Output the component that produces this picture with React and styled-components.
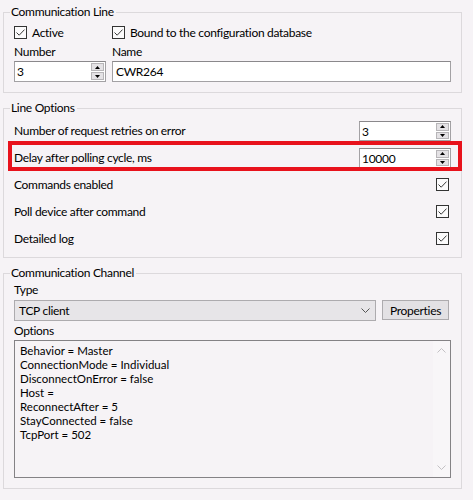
import React from 'react'
import styled, { createGlobalStyle } from 'styled-components'

const GlobalStyle = createGlobalStyle`
  html, body {
    margin: 0;
    padding: 0;
    background: #f6f3f6;
  }
  body {
    font-family: Lato, "Noto Sans", sans-serif;
    font-size: 12px;
    letter-spacing: -0.3px;
    color: #000;
  }
`

const options = [
  'Behavior = Master',
  'ConnectionMode = Individual',
  'DisconnectOnError = false',
  'Host =',
  'ReconnectAfter = 5',
  'StayConnected = false',
  'TcpPort = 502',
]

const lineOptions = [
  { label: 'Number of request retries on error', kind: 'spin', value: '3' },
  { label: 'Delay after polling cycle, ms', kind: 'spin', value: '10000', highlighted: true },
  { label: 'Commands enabled', kind: 'check' },
  { label: 'Poll device after command', kind: 'check' },
  { label: 'Detailed log', kind: 'check' },
]

const Check = () => (
  <CheckBox>
    <svg width="11" height="11" viewBox="0 0 11 11">
      <path d="M1.5 5.5 L4.2 8.2 L9.5 2.6" fill="none" stroke="#3a3a3a" strokeWidth="1" />
    </svg>
  </CheckBox>
)

const SpinInput = ({ value, width }) => (
  <InputBox $width={width}>
    <InputText>{value}</InputText>
    <Spin>
      <SpinBtn>
        <svg width="5" height="3" viewBox="0 0 5 3"><polygon points="2.5,0 5,3 0,3" fill="#000" /></svg>
      </SpinBtn>
      <SpinBtn>
        <svg width="5" height="3" viewBox="0 0 5 3"><polygon points="0,0 5,0 2.5,3" fill="#000" /></svg>
      </SpinBtn>
    </Spin>
  </InputBox>
)

export default function App() {
  return (
    <Page>
      <GlobalStyle />

      <Group $pad="4px 10px 10px 10px">
        <Legend>Communication Line</Legend>
        <LineGrid>
          <CheckLabel><Check />Active</CheckLabel>
          <CheckLabel><Check />Bound to the configuration database</CheckLabel>
          <FieldLabel $top={3}>Number</FieldLabel>
          <FieldLabel $top={3}>Name</FieldLabel>
          <SpinInput value="3" />
          <InputBox>
            <InputText $pad={3}>CWR264</InputText>
          </InputBox>
        </LineGrid>
      </Group>

      <Group $pad="1px 10px 5px 10px">
        <Legend>Line Options</Legend>
        {lineOptions.map((o) => (
          <OptionRow key={o.label} $highlighted={o.highlighted}>
            <span>{o.label}</span>
            {o.kind === 'spin' ? <SpinInput value={o.value} width={92} /> : <RightCheck><Check /></RightCheck>}
          </OptionRow>
        ))}
      </Group>

      <Group $pad="1px 10px 10px 10px">
        <Legend>Communication Channel</Legend>
        <FieldLabel>Type</FieldLabel>
        <SelectRow>
          <Select>
            <span>TCP client</span>
            <svg width="9" height="5" viewBox="0 0 9 5">
              <path d="M0.5 0.5 L4.5 4.5 L8.5 0.5" fill="none" stroke="#555" strokeWidth="1" />
            </svg>
          </Select>
          <Button>Properties</Button>
        </SelectRow>
        <FieldLabel $top={2}>Options</FieldLabel>
        <OptionsBox>
          <OptionLines>
            {options.map((l) => <div key={l}>{l}</div>)}
          </OptionLines>
          <ScrollTrack>
            <svg width="9" height="5" viewBox="0 0 9 5">
              <path d="M0.5 4.5 L4.5 0.5 L8.5 4.5" fill="none" stroke="#c3c1c4" strokeWidth="1" />
            </svg>
            <svg width="9" height="5" viewBox="0 0 9 5">
              <path d="M0.5 0.5 L4.5 4.5 L8.5 0.5" fill="none" stroke="#c3c1c4" strokeWidth="1" />
            </svg>
          </ScrollTrack>
        </OptionsBox>
      </Group>
    </Page>
  )
}

const Page = styled.div`
  width: 473px;
  height: 500px;
  box-sizing: border-box;
  padding: 4px 11px 0 3px;
  display: flex;
  flex-direction: column;
  gap: 7px;
`

const Group = styled.fieldset`
  margin: 0;
  min-width: 0;
  border: 1px solid #dcd9dc;
  padding: ${(p) => p.$pad};
`

const Legend = styled.legend`
  padding: 0 2px 0 1px;
  margin-left: -4px;
  line-height: 16px;
`

const LineGrid = styled.div`
  display: grid;
  grid-template-columns: 92px 1fr;
  column-gap: 6px;
  & > :nth-child(5), & > :nth-child(6) {
    margin-top: 1px;
  }
`

const CheckLabel = styled.label`
  display: flex;
  align-items: center;
  gap: 5px;
  white-space: nowrap;
  height: 17px;
`

const CheckBox = styled.span`
  width: 13px;
  height: 13px;
  box-sizing: border-box;
  border: 1px solid #333;
  background: #fbfafb;
  display: inline-flex;
  align-items: center;
  justify-content: center;
  flex: none;
`

const RightCheck = styled.span`
  display: flex;
  margin-right: 2px;
`

const FieldLabel = styled.div`
  line-height: 16px;
  margin-top: ${(p) => p.$top || 0}px;
`

const InputBox = styled.div`
  width: ${(p) => (p.$width ? p.$width + 'px' : 'auto')};
  height: 21px;
  box-sizing: border-box;
  background: #fff;
  border: 1px solid #a3a1a4;
  border-top-color: #8a888b;
  display: flex;
  align-items: stretch;
`

const InputText = styled.span`
  flex: 1;
  padding-left: ${(p) => p.$pad || 2}px;
  line-height: 19px;
`

const Spin = styled.div`
  width: 13px;
  display: flex;
  flex-direction: column;
  gap: 1px;
  padding: 1px 1px 1px 0;
`

const SpinBtn = styled.div`
  flex: 1;
  background: #e4e2e5;
  border: 1px solid #b7b5b8;
  display: flex;
  align-items: center;
  justify-content: center;
`

const OptionRow = styled.div`
  position: relative;
  height: 27px;
  display: flex;
  align-items: center;
  justify-content: space-between;
  & > div {
    height: 20px;
    margin-top: 1px;
  }
  &::before {
    content: '';
    display: ${(p) => (p.$highlighted ? 'block' : 'none')};
    position: absolute;
    left: -6px;
    right: -11px;
    top: -3px;
    bottom: 0;
    border: 4px solid #e8121c;
    pointer-events: none;
  }
`

const SelectRow = styled.div`
  display: flex;
  align-items: flex-start;
  gap: 6px;
  margin-top: 2px;
  padding-right: 2px;
`

const Select = styled.div`
  flex: 1;
  height: 21px;
  box-sizing: border-box;
  background: #e7e5e8;
  border: 1px solid #adabae;
  display: flex;
  align-items: center;
  justify-content: space-between;
  padding: 0 5px 0 4px;
`

const Button = styled.div`
  width: 67px;
  height: 20px;
  box-sizing: border-box;
  background: #e3e1e4;
  border: 1px solid #adabae;
  display: flex;
  align-items: center;
  justify-content: center;
`

const OptionsBox = styled.div`
  margin-top: 1px;
  height: 138px;
  box-sizing: border-box;
  border: 1px solid #848285;
  display: flex;
`

const OptionLines = styled.div`
  flex: 1;
  padding: 3px 5px;
  font-size: 11.5px;
  letter-spacing: 0;
  line-height: 14px;
`

const ScrollTrack = styled.div`
  width: 17px;
  background: #f8f6f8;
  display: flex;
  flex-direction: column;
  align-items: center;
  justify-content: space-between;
  padding: 7px 0 7px;
`
